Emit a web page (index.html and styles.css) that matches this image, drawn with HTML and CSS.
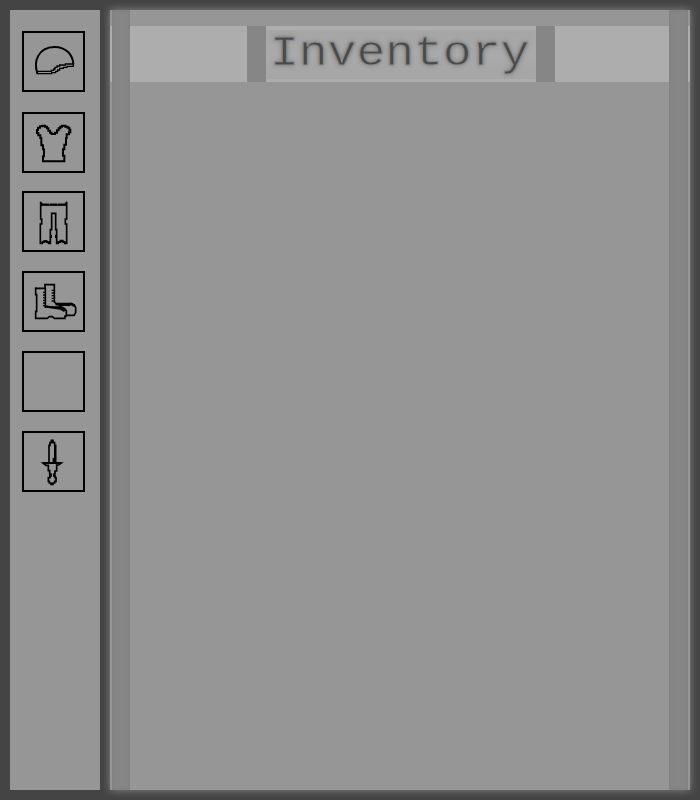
FILE: index.html
```html
<!DOCTYPE html>
<html lang="en">
<head>
<meta charset="utf-8">
<title>Inventory</title>
<link rel="stylesheet" href="styles.css">
</head>
<body>
<aside class="equipment">
  <div class="slot"><svg viewBox="27 24 177 171">
    <path d="M67 144 C55 110 69 67 118 66 C155 66 174 91 175 118" stroke-width="6"/>
    <path d="M66 139H109V136H116V132H120V127H126V123H134V120H151V117H175V124H156V127H145V130H134V135H128V139H122V143H110V146H66Z" stroke-width="4"/></svg></div>
  <div class="slot slot-chest"><svg viewBox="27 27 177 171">
    <path d="M84 169V154H87V133H84V121H79V99H76V91H70V84H66V75H69V68H75V64H82V62H90V65H96V70H100V77H105V83H110V87H120V83H126V76H131V70H136V65H141V62H151V65H158V68H163V74H166V82H162V88H155V99H153V119H148V133H144V152H148V169Z" stroke-width="6"/></svg></div>
  <div class="slot slot-legs"><svg viewBox="27 24 177 171">
    <path d="M77 50V102H80V117H76V175H82V171H88V168H95V171H101V175H106V134H110V85H122V134H125V175H130V171H136V167H143V171H149V175H155V117H151V102H155V50" stroke-width="5"/>
    <path d="M77 51L84 56H148L155 50V62H77Z" fill="#000" stroke-width="1"/>
    <path d="M103 54V59M128 54V59" class="glint"/><path d="M108 149V159M123 149V159M81 172L91 168L101 173M131 172L141 168L151 173" stroke-width="6"/></svg></div>
  <div class="slot"><svg viewBox="27 24 177 171">
    <path d="M62 67V89H65V139H62V160H97L103 155H112L118 160H150V153H154V137L147 130L137 126H91V70H62" stroke-width="5"/>
    <path d="M90 70V59H118V110L123 116H169L178 120L182 128V143L177 151H154" stroke-width="5"/>
    <path d="M84 82H90M84 90H90M84 98H90M84 106H90M84 114H90M84 122H90M110 76H117M110 84H117M110 92H117M110 100H117M110 108H117" stroke-width="4"/>
    <path d="M90 124L115 128L137 131L149 138M122 117L142 120L169 117L178 123M132 125L144 119L165 120" stroke-width="7"/></svg></div>
  <div class="slot"></div>
  <div class="slot"><svg viewBox="27 24 177 171">
    <path d="M102 112V61H105V53H109V46H114V53H119V61H122V112" stroke-width="5"/>
    <path d="M120 62V112M116 98V113" stroke-width="6"/>
    <path d="M84 114H139L131 120H125V138H120V147H117V153H120V158H123V169H119V174H114V178H108V174H103V169H100V158H105V151H108V147H104V137H100V121H93Z" stroke-width="5"/>
    <path d="M84 114H139M105 150L108 156M119 149L116 155" stroke-width="6"/></svg></div>
</aside>
<main class="inventory">
  <header class="banner"><h1 class="title"><span class="label">Inventory</span></h1></header>
</main>
</body>
</html>
```
FILE: styles.css
```css
* { box-sizing: border-box; }
body {
  margin: 0;
  padding: 10px;
  width: 700px;
  height: 800px;
  display: flex;
  gap: 10px;
  background: #444;
  overflow: hidden;
}
.equipment {
  width: 90px;
  height: 780px;
  padding: 21px 0 0 12px;
  background: #969696;
}
.slot {
  width: 63px;
  height: 61px;
  margin-bottom: 19px;
  border: 2px solid #000;
}
.slot:first-child { margin-bottom: 20px; }
.slot-chest { margin-bottom: 18px; }
.slot svg { display: block; width: 59px; height: 57px; fill: none; stroke: #000; }
.slot .glint { stroke: #888; stroke-width: 2; }
.inventory {
  position: relative;
  width: 580px;
  height: 780px;
  padding-top: 16px;
  background: #969696;
  box-shadow: 0 0 8px #888;
}
.inventory::before, .inventory::after {
  content: "";
  position: absolute;
  top: 0;
  bottom: 0;
  width: 18px;
  background: #868686;
  box-shadow: inset 0 0 4px #7e7e7e;
}
.inventory::before { left: 2px; }
.inventory::after { right: 2px; width: 19px; }
.banner {
  display: flex;
  justify-content: center;
  height: 56px;
  background: #adadad;
}
.title {
  margin: 0 -2px 0 0;
  width: 308px;
  height: 56px;
  padding-left: 4px;
  border: solid #868686;
  border-width: 0 19px;
  background: linear-gradient(#adadad 4px, #a5a5a5 4px, #aaa 50%, #a5a5a5 53px, #adadad 53px);
  color: #4a4a4a;
  font: 400 48px/54px "Courier New", "Liberation Mono", monospace;
  text-shadow: 0 0 6px #777;
}
.label {
  display: block;
  transform: scaleY(.87);
  transform-origin: 0 36px;
  -webkit-text-stroke: 1px #8c8c8c;
}
```
